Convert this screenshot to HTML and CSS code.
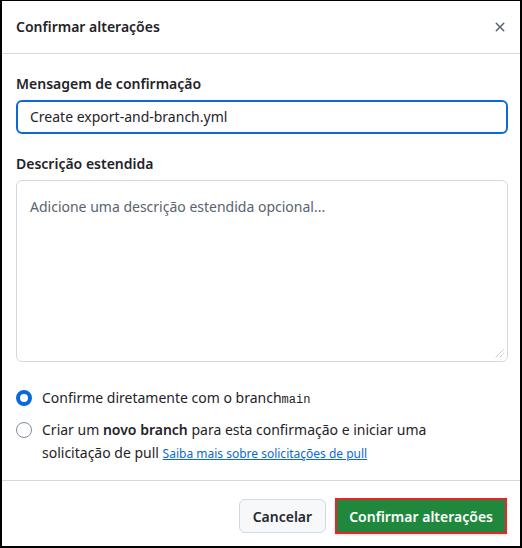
FILE: index.html
```html
<!DOCTYPE html>
<html lang="pt">
<head>
<meta charset="utf-8">
<title>Confirmar alterações</title>
<link rel="stylesheet" href="styles.css">
</head>
<body>
<div class="dialog">
  <header class="dialog-header">
    <h1 class="dialog-title">Confirmar alterações</h1>
    <button class="close-btn" aria-label="Fechar">
      <svg width="16" height="16" viewBox="0 0 16 16" fill="currentColor"><path d="M3.72 3.72a.75.75 0 0 1 1.06 0L8 6.94l3.22-3.22a.749.749 0 0 1 1.275.326.749.749 0 0 1-.215.734L9.06 8l3.22 3.22a.749.749 0 0 1-.326 1.275.749.749 0 0 1-.734-.215L8 9.06l-3.22 3.22a.751.751 0 0 1-1.042-.018.751.751 0 0 1-.018-1.042L6.94 8 3.72 4.78a.75.75 0 0 1 0-1.06Z"/></svg>
    </button>
  </header>
  <div class="dialog-body">
    <div class="field">
      <label class="field-label">Mensagem de confirmação</label>
      <div class="input focused">Create export-and-branch.yml</div>
    </div>
    <div class="field">
      <label class="field-label">Descrição estendida</label>
      <div class="textarea">
        <span class="placeholder">Adicione uma descrição estendida opcional...</span>
        <svg class="grip" width="9" height="9" viewBox="0 0 9 9"><g stroke="#9aa1a8" stroke-width="1" stroke-dasharray="1 1"><line x1="8.5" y1="0.5" x2="0.5" y2="8.5"/><line x1="8.5" y1="4.5" x2="4.5" y2="8.5"/></g></svg>
      </div>
    </div>
    <div class="radios">
      <div class="radio-row">
        <span class="radio checked"></span>
        <span class="radio-text">Confirme diretamente com o branch<code>main</code></span>
      </div>
      <div class="radio-row">
        <span class="radio"></span>
        <span class="radio-text">Criar um <b>novo branch</b> para esta confirmação e iniciar uma solicitação de pull <a href="#" class="link">Saiba mais sobre solicitações de pull</a></span>
      </div>
    </div>
  </div>
  <footer class="dialog-footer">
    <button class="btn">Cancelar</button>
    <button class="btn btn-primary">Confirmar alterações</button>
  </footer>
</div>
</body>
</html>
```

FILE: styles.css
```css
* { box-sizing: border-box; }
html, body { margin: 0; padding: 0; background: #fff; }
body {
  font-family: "Noto Sans", "Open Sans", sans-serif;
  color: #1f2328;
  font-size: 14px;
}
.dialog {
  width: 522px;
  height: 548px;
  border-top: 1px solid #000;
  border-left: 2px solid #000;
  border-right: 2px solid #000;
  border-bottom: 2px solid #000;
  display: flex;
  flex-direction: column;
  background: #fff;
}
.dialog-header {
  height: 53px;
  display: flex;
  align-items: center;
  justify-content: space-between;
  padding: 0 4px 0 14px;
  border-bottom: 1px solid #d1d9e0;
  flex-shrink: 0;
}
.dialog-title {
  margin: 0;
  font-size: 14px;
  font-weight: 600;
  line-height: 20px;
  color: #1f2328;
}
.close-btn {
  width: 32px;
  height: 32px;
  border: 0;
  background: transparent;
  color: #59636e;
  display: flex;
  align-items: center;
  justify-content: center;
  padding: 0;
}
.dialog-body {
  flex: 1;
  padding: 20px 12px 0 14px;
  border-bottom: 1px solid #d1d9e0;
}
.field { display: flex; flex-direction: column; margin-bottom: 20px; }
.field-label {
  font-weight: 600;
  line-height: 20px;
  margin-bottom: 6px;
}
.input {
  height: 34px;
  border: 2px solid #0969da;
  border-radius: 6px;
  padding: 0 12px;
  display: flex;
  align-items: center;
  line-height: 20px;
}
.textarea {
  position: relative;
  height: 182px;
  border: 1px solid #d1d9e0;
  border-radius: 6px;
  padding: 16px 13px;
  line-height: 20px;
}
.placeholder { color: #59636e; }
.grip { position: absolute; right: 3px; bottom: 3px; }
.radios {
  display: flex;
  flex-direction: column;
  gap: 8px;
  margin-top: 26px;
  padding-right: 30px;
}
.radio-row { display: flex; align-items: flex-start; gap: 10px; }
.radio {
  width: 16px;
  height: 16px;
  border-radius: 50%;
  border: 1px solid #818b98;
  flex-shrink: 0;
  margin-top: 2px;
  background: #fff;
}
.radio.checked { border: 4px solid #0969da; }
.radio-text { line-height: 23px; margin-top: -2px; }
.radio-text b { font-weight: 600; }
code {
  font-family: "Liberation Mono", "DejaVu Sans Mono", monospace;
  font-size: 12px;
}
.link { color: #0969da; font-size: 12px; text-decoration: underline; }
.dialog-footer {
  display: flex;
  justify-content: flex-end;
  align-items: center;
  gap: 9px;
  padding: 17px 13px 12px 16px;
  flex-shrink: 0;
}
.btn {
  height: 34px;
  padding: 0 13px;
  font-family: inherit;
  font-size: 14px;
  font-weight: 600;
  color: #25292e;
  background: #f6f8fa;
  border: 1px solid #d1d9e0;
  border-radius: 6px;
}
.btn-primary {
  background: #1f883d;
  color: #fff;
  border: 2px solid #e5262b;
  border-radius: 0;
  height: 36px;
  padding: 0 12px;
  box-shadow: 0 1px 2px rgba(0,0,0,.15);
}
```
